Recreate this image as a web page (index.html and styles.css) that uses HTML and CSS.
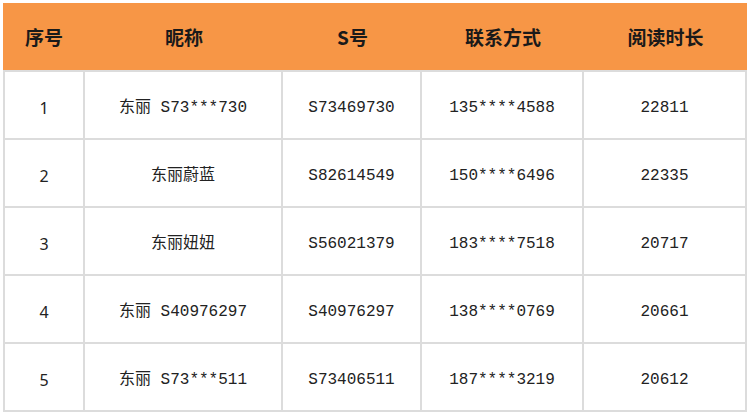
FILE: index.html
```html
<!DOCTYPE html>
<html lang="zh">
<head>
<meta charset="utf-8">
<link rel="stylesheet" href="styles.css">
</head>
<body>
<div class="table">
  <div class="row head">
    <div class="cell">序号</div>
    <div class="cell">昵称</div>
    <div class="cell">S号</div>
    <div class="cell">联系方式</div>
    <div class="cell">阅读时长</div>
  </div>
  <div class="row">
    <div class="cell idx">1</div>
    <div class="cell">东丽 S73***730</div>
    <div class="cell">S73469730</div>
    <div class="cell">135****4588</div>
    <div class="cell">22811</div>
  </div>
  <div class="row">
    <div class="cell idx">2</div>
    <div class="cell">东丽蔚蓝</div>
    <div class="cell">S82614549</div>
    <div class="cell">150****6496</div>
    <div class="cell">22335</div>
  </div>
  <div class="row">
    <div class="cell idx">3</div>
    <div class="cell">东丽妞妞</div>
    <div class="cell">S56021379</div>
    <div class="cell">183****7518</div>
    <div class="cell">20717</div>
  </div>
  <div class="row">
    <div class="cell idx">4</div>
    <div class="cell">东丽 S40976297</div>
    <div class="cell">S40976297</div>
    <div class="cell">138****0769</div>
    <div class="cell">20661</div>
  </div>
  <div class="row">
    <div class="cell idx">5</div>
    <div class="cell">东丽 S73***511</div>
    <div class="cell">S73406511</div>
    <div class="cell">187****3219</div>
    <div class="cell">20612</div>
  </div>
</div>
</body>
</html>
```
FILE: styles.css
```css
html, body {
  margin: 0;
  padding: 0;
  background: #ffffff;
}
body {
  padding: 3px 3px;
}
.table {
  width: 744px;
  display: flex;
  flex-direction: column;
}
.row {
  display: grid;
  grid-template-columns: 82px 198px 139px 162px 163px;
  height: 68px;
  border-bottom: 2px solid #dcdcdc;
  box-sizing: border-box;
  font-family: "Liberation Mono", "Noto Sans CJK SC", monospace;
  font-size: 16px;
  line-height: 16px;
  color: #222;
}
.row.head {
  height: 69px;
  background: #f79646;
  font-family: "Noto Sans CJK SC", sans-serif;
  font-weight: bold;
  font-size: 19px;
  line-height: 19px;
  color: #1a1a1a;
}
.cell {
  display: flex;
  align-items: center;
  justify-content: center;
  border-right: 2px solid #dcdcdc;
  white-space: pre;
  padding-top: 5px;
}
.row.head .cell {
  border: none;
  padding-top: 0;
}
.row .cell:first-child {
  border-left: 2px solid #dcdcdc;
}
.row.head .cell:first-child {
  border-left: none;
}
.idx {
  font-family: "Noto Sans", sans-serif;
  font-size: 16px;
  color: #222;
}
```
